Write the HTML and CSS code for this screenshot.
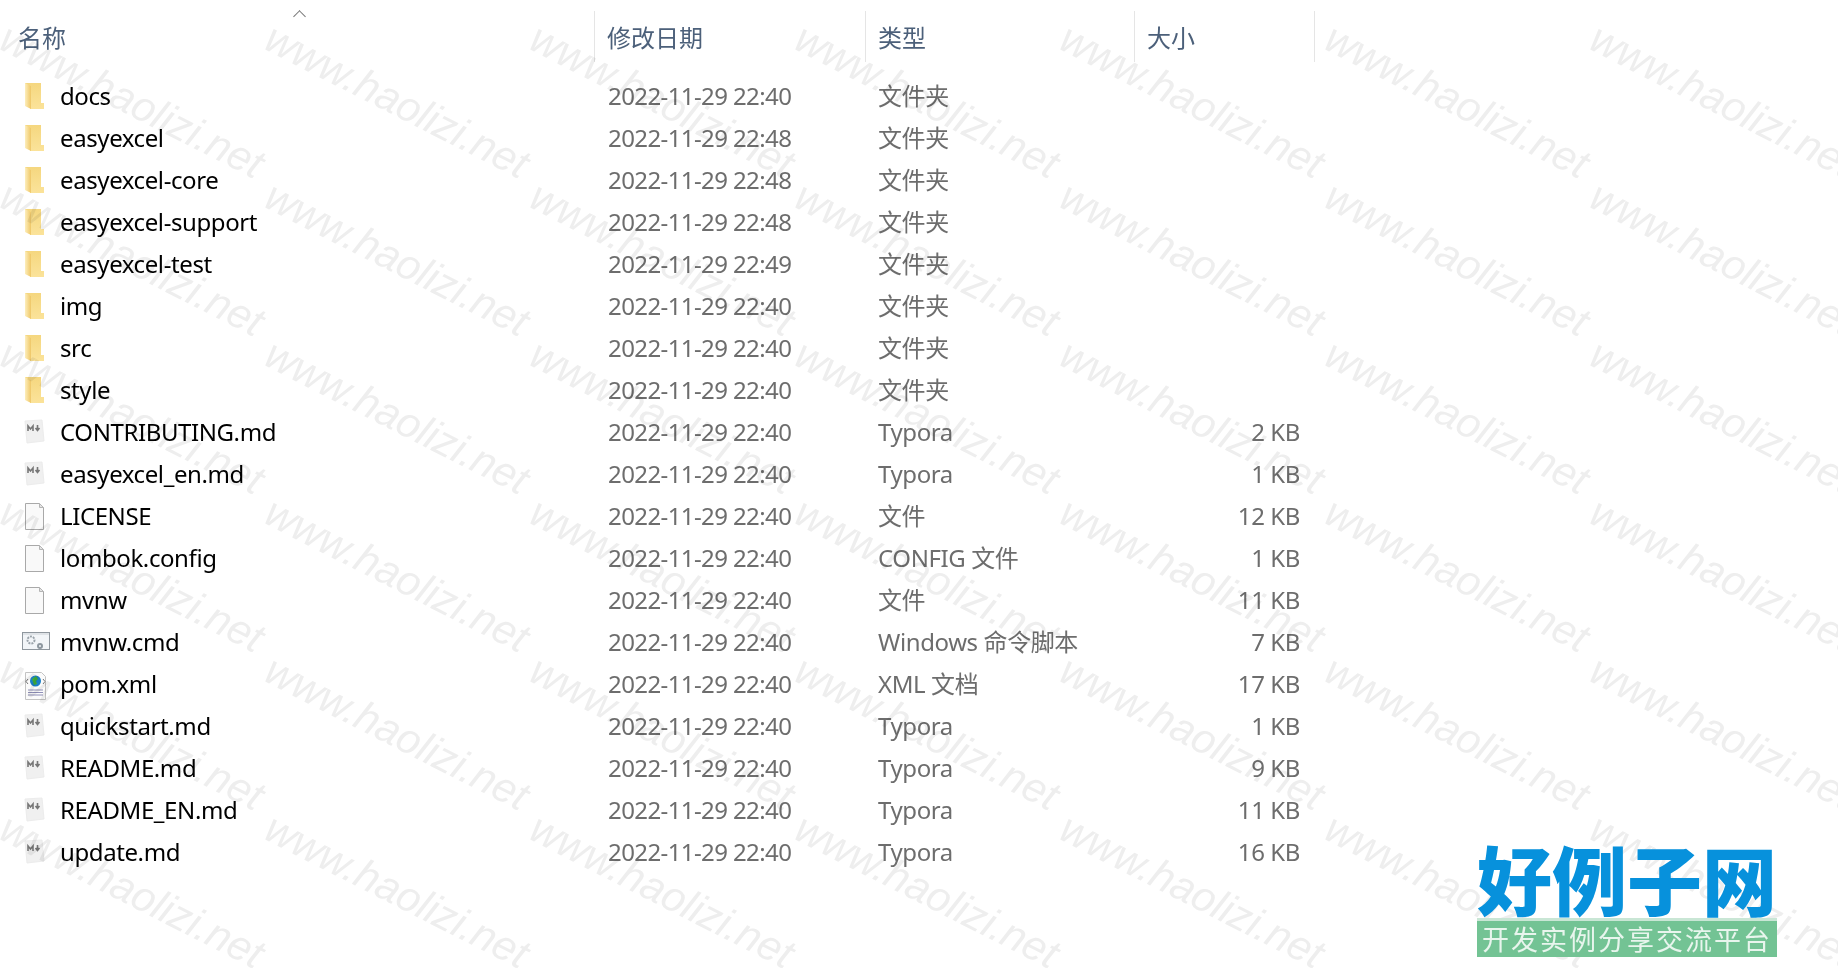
FILE: index.html
```html
<!DOCTYPE html>
<html lang="zh-CN">
<head>
    <meta charset="UTF-8">
    <title>easyexcel</title>
    <link rel="stylesheet" href="styles.css">
</head>
<body>
    <svg class="icon-defs" width="0" height="0">
        <defs>
            <linearGradient id="folderBack" x1="0" y1="0" x2="0" y2="1">
                <stop offset="0" stop-color="#f5d77f"/>
                <stop offset="1" stop-color="#fbe39a"/>
            </linearGradient>
            <linearGradient id="folderFront" x1="0" y1="0" x2="1" y2="0">
                <stop offset="0" stop-color="#fdeebc"/>
                <stop offset="1" stop-color="#efc766"/>
            </linearGradient>
            <symbol id="folder" viewBox="0 0 32 32">
                <path d="M7 3h16v20h3v6H12V26H7z" fill="url(#folderBack)"/>
                <path d="M7 3l6 3v23l-6-3z" fill="url(#folderFront)"/>
            </symbol>
            <symbol id="md" viewBox="0 0 32 32">
                <path d="M7 5l17-1 2 21-17 2z" fill="#f0f0f0" stroke="#ececec"/>
                <path d="M10 15v-5l2.500 3 2.500-3v5M19.500 9v5M17.500 12l2 2.500 2-2.500" fill="none" stroke="#777" stroke-width="1.600"/>
            </symbol>
            <symbol id="file" viewBox="0 0 32 32">
                <path d="M7.500 3.500h14l4 4v22h-18z" fill="#f9f9f9" stroke="#a9a9a9"/>
                <path d="M21.500 3.500v4h4z" fill="#e4e4e4" stroke="#b5b5b5"/>
            </symbol>
            <symbol id="cmd" viewBox="0 0 32 32">
                <rect x="4.500" y="6.500" width="27" height="17" fill="#f2f5f8" stroke="#8f979e"/>
                <path d="M5 7h26v2H5z" fill="#dfe3e7"/>
                <circle cx="13" cy="14" r="3.500" fill="none" stroke="#9aa3aa" stroke-width="2" stroke-dasharray="2 1"/>
                <circle cx="22" cy="20" r="2" fill="none" stroke="#8d979f" stroke-width="2"/>
            </symbol>
            <symbol id="xml" viewBox="0 0 32 32">
                <path d="M7.500 4.500h16l4 4v23h-20z" fill="#fbfbfb" stroke="#c4c4c4"/>
                <path d="M10 22h15M10 24.500h15M10 27h15" stroke="#8f8fb8"/>
                <path d="M10 11l-2 2.500 2 2.500M25 11l2 2.500-2 2.500" fill="none" stroke="#777"/>
                <circle cx="17.500" cy="13" r="5.500" fill="#1a7fc8"/>
                <path d="M14 11l4-3 2 3-2 2 1 3-3 1-1-3z" fill="#3fae3b"/>
            </symbol>
        </defs>
    </svg>

    <div class="file-list">
        <div class="list-header">
            <div class="col-head col-name">名称<span class="sort-caret"></span></div>
            <div class="col-head">修改日期</div>
            <div class="col-head">类型</div>
            <div class="col-head">大小</div>
        </div>

        <div class="row"><div class="name"><svg class="icon"><use href="#folder"/></svg>docs</div><div class="date">2022-11-29 22:40</div><div class="type">文件夹</div><div class="size"></div></div>
        <div class="row"><div class="name"><svg class="icon"><use href="#folder"/></svg>easyexcel</div><div class="date">2022-11-29 22:48</div><div class="type">文件夹</div><div class="size"></div></div>
        <div class="row"><div class="name"><svg class="icon"><use href="#folder"/></svg>easyexcel-core</div><div class="date">2022-11-29 22:48</div><div class="type">文件夹</div><div class="size"></div></div>
        <div class="row"><div class="name"><svg class="icon"><use href="#folder"/></svg>easyexcel-support</div><div class="date">2022-11-29 22:48</div><div class="type">文件夹</div><div class="size"></div></div>
        <div class="row"><div class="name"><svg class="icon"><use href="#folder"/></svg>easyexcel-test</div><div class="date">2022-11-29 22:49</div><div class="type">文件夹</div><div class="size"></div></div>
        <div class="row"><div class="name"><svg class="icon"><use href="#folder"/></svg>img</div><div class="date">2022-11-29 22:40</div><div class="type">文件夹</div><div class="size"></div></div>
        <div class="row"><div class="name"><svg class="icon"><use href="#folder"/></svg>src</div><div class="date">2022-11-29 22:40</div><div class="type">文件夹</div><div class="size"></div></div>
        <div class="row"><div class="name"><svg class="icon"><use href="#folder"/></svg>style</div><div class="date">2022-11-29 22:40</div><div class="type">文件夹</div><div class="size"></div></div>
        <div class="row"><div class="name"><svg class="icon"><use href="#md"/></svg>CONTRIBUTING.md</div><div class="date">2022-11-29 22:40</div><div class="type">Typora</div><div class="size">2 KB</div></div>
        <div class="row"><div class="name"><svg class="icon"><use href="#md"/></svg>easyexcel_en.md</div><div class="date">2022-11-29 22:40</div><div class="type">Typora</div><div class="size">1 KB</div></div>
        <div class="row"><div class="name"><svg class="icon"><use href="#file"/></svg>LICENSE</div><div class="date">2022-11-29 22:40</div><div class="type">文件</div><div class="size">12 KB</div></div>
        <div class="row"><div class="name"><svg class="icon"><use href="#file"/></svg>lombok.config</div><div class="date">2022-11-29 22:40</div><div class="type">CONFIG 文件</div><div class="size">1 KB</div></div>
        <div class="row"><div class="name"><svg class="icon"><use href="#file"/></svg>mvnw</div><div class="date">2022-11-29 22:40</div><div class="type">文件</div><div class="size">11 KB</div></div>
        <div class="row"><div class="name"><svg class="icon"><use href="#cmd"/></svg>mvnw.cmd</div><div class="date">2022-11-29 22:40</div><div class="type">Windows 命令脚本</div><div class="size">7 KB</div></div>
        <div class="row"><div class="name"><svg class="icon"><use href="#xml"/></svg>pom.xml</div><div class="date">2022-11-29 22:40</div><div class="type">XML 文档</div><div class="size">17 KB</div></div>
        <div class="row"><div class="name"><svg class="icon"><use href="#md"/></svg>quickstart.md</div><div class="date">2022-11-29 22:40</div><div class="type">Typora</div><div class="size">1 KB</div></div>
        <div class="row"><div class="name"><svg class="icon"><use href="#md"/></svg>README.md</div><div class="date">2022-11-29 22:40</div><div class="type">Typora</div><div class="size">9 KB</div></div>
        <div class="row"><div class="name"><svg class="icon"><use href="#md"/></svg>README_EN.md</div><div class="date">2022-11-29 22:40</div><div class="type">Typora</div><div class="size">11 KB</div></div>
        <div class="row"><div class="name"><svg class="icon"><use href="#md"/></svg>update.md</div><div class="date">2022-11-29 22:40</div><div class="type">Typora</div><div class="size">16 KB</div></div>
    </div>

    <!-- водяной знак -->
    <div class="watermark" id="watermark"></div>

    <div class="logo">
        <div class="logo-title">好例子网</div>
        <div class="logo-sub">开发实例分享交流平台</div>
    </div>

    <script>
        const mark = document.getElementById('watermark');
        for (let i = 0; i < 42; i++) {
            const cell = document.createElement('span');
            cell.className = 'mark-text';
            cell.textContent = 'www.haolizi.net';
            mark.appendChild(cell);
        }
    </script>
</body>
</html>
```

FILE: styles.css
```css
html, body {
    height: 100%;
}
body {
    font-family: "Noto Sans", "Noto Sans CJK SC", sans-serif;
    font-size: 24px;
    background-color: #fff;
    color: #000;
    margin: 0;
    padding: 0;
    overflow: hidden;
    position: relative;
}
.icon-defs {
    display: block;
}
.file-list {
    width: 1315px;
}
.list-header {
    display: grid;
    grid-template-columns: 595px 271px 269px 180px;
    height: 75px;
}
.col-head {
    box-sizing: border-box;
    height: 51px;
    margin-top: 11px;
    padding-left: 12px;
    padding-top: 8px;
    border-right: 1px solid #e5e5e5;
    color: #4c607a;
    position: relative;
}
.col-name {
    padding-left: 18px;
}
.sort-caret {
    position: absolute;
    left: 295px;
    top: 1px;
    width: 8px;
    height: 8px;
    border-left: 1px solid #777;
    border-top: 1px solid #777;
    transform: rotate(45deg);
}
.row {
    display: grid;
    grid-template-columns: 595px 271px 269px 165px;
    height: 42px;
    align-items: center;
    line-height: 42px;
    white-space: nowrap;
}
.name {
    display: flex;
    align-items: center;
    letter-spacing: -0.4px;
}
.icon {
    width: 32px;
    height: 32px;
    margin: 0 10px 0 18px;
    flex: none;
}
.date, .type, .size {
    color: #6d6d6d;
}
.date {
    padding-left: 13px;
    letter-spacing: -0.6px;
}
.type {
    padding-left: 12px;
    letter-spacing: -0.4px;
}
.size {
    text-align: right;
    letter-spacing: -0.4px;
}
.watermark {
    position: absolute;
    top: 0;
    left: 0;
    width: 1838px;
    height: 968px;
    overflow: hidden;
    pointer-events: none;
    display: grid;
    grid-template-columns: repeat(7, 265px);
    grid-auto-rows: 158px;
    mix-blend-mode: multiply;
}
.mark-text {
    font-family: "Liberation Sans", sans-serif;
    font-style: italic;
    font-size: 42px;
    color: #eeeeee;
    white-space: nowrap;
    transform-origin: 0 0;
    transform: translate(14px, 14px) rotate(27deg);
    height: 0;
}
.logo {
    position: absolute;
    left: 1477px;
    top: 838px;
    width: 300px;
}
.logo-title {
    font-family: "Noto Sans CJK SC", sans-serif;
    font-weight: 900;
    font-size: 75px;
    line-height: 80px;
    color: #0791dc;
    text-align: center;
    white-space: nowrap;
}
.logo-sub {
    background: #73c394;
    border-top: 3px solid #c9e6d5;
    margin-top: 0;
    height: 36px;
    line-height: 36px;
    font-family: "Noto Sans CJK SC", sans-serif;
    font-size: 27px;
    color: #e8f5ed;
    text-align: center;
    white-space: nowrap;
    letter-spacing: 2px;
}
```
